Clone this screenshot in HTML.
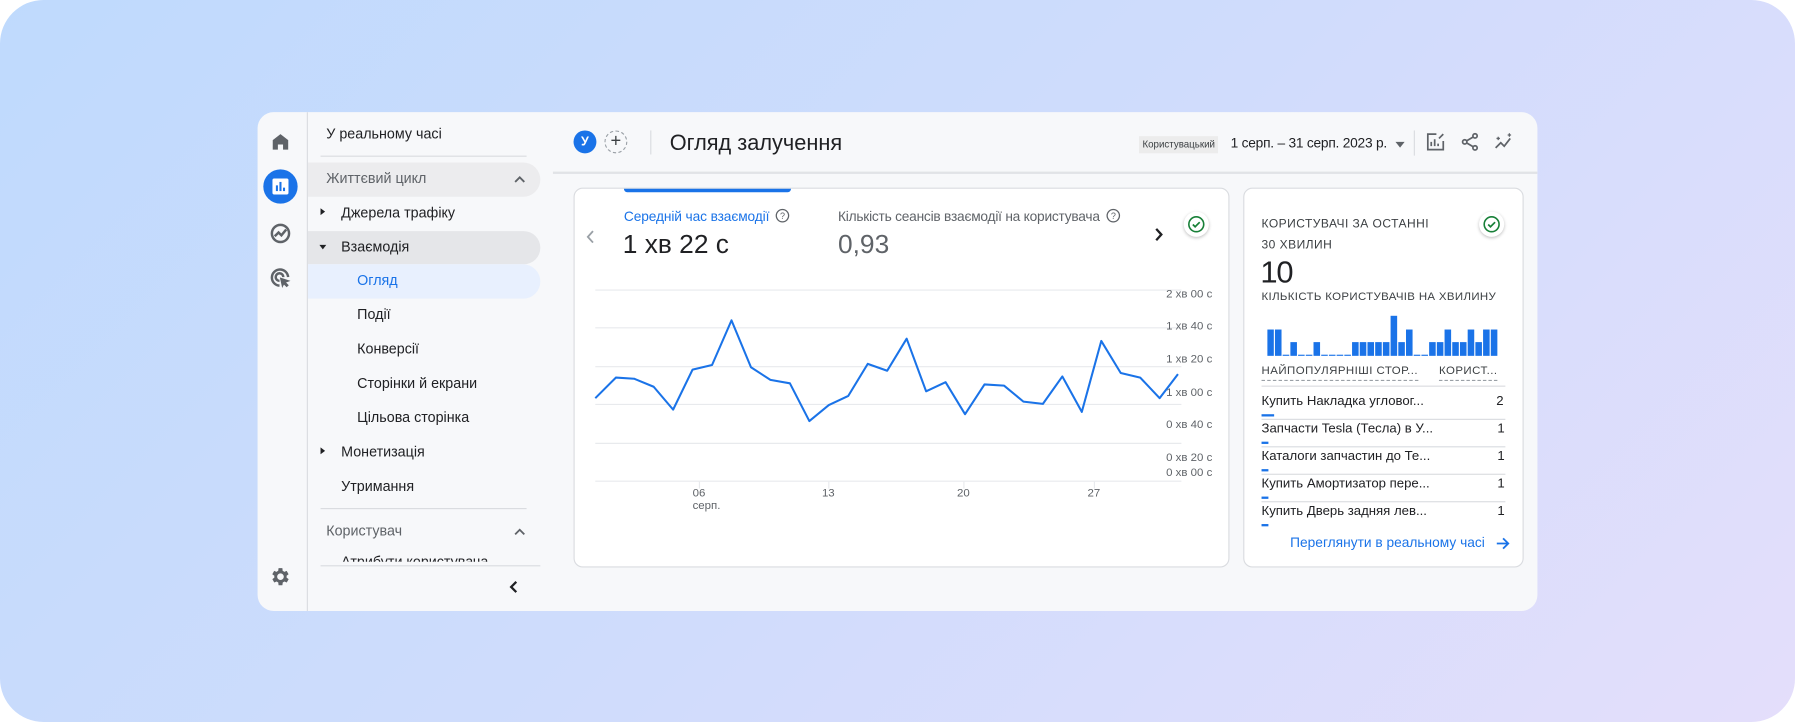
<!DOCTYPE html>
<html><head><meta charset="utf-8"><style>
*{margin:0;padding:0;box-sizing:border-box}
html,body{width:1795px;height:722px;overflow:hidden;background:#fff}
#stage{position:absolute;left:0;top:0;width:1568px;height:631px;transform:scale(1.14477,1.1442);transform-origin:0 0;border-radius:38px;background:linear-gradient(135deg,#bfdafd 0%,#cfdcfc 50%,#e4defb 100%);font-family:"Liberation Sans","Noto Sans CJK SC",sans-serif;color:#202124;overflow:hidden}
.a{position:absolute;white-space:nowrap}
#card{position:absolute;left:225px;top:98px;width:1118px;height:436px;background:#f7f8fa;border-radius:14px;overflow:hidden}
.nav{font-size:12.5px;color:#202124}
.tri{position:absolute;width:0;height:0}
.ax{font-size:10px;color:#5f6368;text-align:right}
.ph{font-size:10.5px;color:#3c4043;letter-spacing:.4px}
.row{font-size:11.5px;color:#202124}
.q{display:inline-block;vertical-align:-2px;margin-left:5px}
</style></head><body><div id="stage">
<div id="card">
 <div class="a" style="left:43px;top:0;width:1px;height:436px;background:#dadce0"></div>
 <svg class="a" style="left:11px;top:17px" width="18" height="18" viewBox="0 0 24 24"><path d="M12 3 3 10v11h6v-6h6v6h6V10z" fill="#5f6368"/></svg>
 <div class="a" style="left:5px;top:50px;width:30px;height:30px;border-radius:50%;background:#1a73e8"></div>
 <svg class="a" style="left:12px;top:57px" width="16" height="16" viewBox="0 0 16 16"><rect x="1" y="1" width="14" height="14" rx="1.5" fill="#fff"/><rect x="4" y="7" width="1.8" height="5" fill="#1a73e8"/><rect x="7.1" y="4" width="1.8" height="8" fill="#1a73e8"/><rect x="10.2" y="9" width="1.8" height="3" fill="#1a73e8"/></svg>
 <svg class="a" style="left:10px;top:96px" width="20" height="20" viewBox="0 0 24 24" fill="none" stroke="#5f6368" stroke-width="2.6"><circle cx="12" cy="12" r="9"/><path d="M6 15l4-4 3 3 5-6"/></svg>
 <svg class="a" style="left:10px;top:135px" width="20" height="20" viewBox="0 0 24 24" fill="none" stroke="#5f6368" stroke-width="2.6"><path d="M20 11A8.5 8.5 0 1 0 11 20"/><path d="M15 11a4 4 0 1 0-4 4"/><path d="M12 12l9 3-4 1.5 3 3-1.5 1.5-3-3L14 21z" fill="#5f6368" stroke-width="1"/></svg>
 <svg class="a" style="left:10px;top:396px" width="20" height="20" viewBox="0 0 24 24"><path fill="#5f6368" d="M19.4 13a7.5 7.5 0 0 0 0-2l2.1-1.6-2-3.5-2.5 1a7 7 0 0 0-1.7-1L15 3h-4l-.4 2.9a7 7 0 0 0-1.7 1l-2.5-1-2 3.5L6.6 11a7.5 7.5 0 0 0 0 2l-2.1 1.6 2 3.5 2.5-1a7 7 0 0 0 1.7 1L11 21h4l.4-2.9a7 7 0 0 0 1.7-1l2.5 1 2-3.5zM13 15.5a3.5 3.5 0 1 1 0-7 3.5 3.5 0 0 1 0 7z" transform="translate(-1 0)"/></svg>
 <div class="a nav" style="left:60px;top:12px">У реальному часі</div>
 <div class="a" style="left:55px;top:38px;width:180px;height:1px;background:#dadce0"></div>
 <div class="a" style="left:44px;top:44px;width:203px;height:30px;background:#ececee;border-radius:0 15px 15px 0"></div>
 <div class="a nav" style="left:60px;top:51px;color:#5f6368">Життєвий цикл</div>
 <svg class="a" style="left:223px;top:54px" width="12" height="10" viewBox="0 0 12 10"><path d="M2 7l4-4 4 4" fill="none" stroke="#5f6368" stroke-width="1.6"/></svg>
 <div class="tri" style="left:55px;top:84px;border-left:4px solid #202124;border-top:3px solid transparent;border-bottom:3px solid transparent"></div>
 <div class="a nav" style="left:73px;top:81px">Джерела трафіку</div>
 <div class="a" style="left:44px;top:104px;width:203px;height:29px;background:#e5e6e9;border-radius:0 15px 15px 0"></div>
 <div class="tri" style="left:54px;top:116px;border-top:4px solid #202124;border-left:3px solid transparent;border-right:3px solid transparent"></div>
 <div class="a nav" style="left:73px;top:111px">Взаємодія</div>
 <div class="a" style="left:44px;top:133px;width:203px;height:30px;background:#e8f0fe;border-radius:0 15px 15px 0"></div>
 <div class="a nav" style="left:87px;top:140px;color:#1a73e8">Огляд</div>
 <div class="a nav" style="left:87px;top:170px">Події</div>
 <div class="a nav" style="left:87px;top:200px">Конверсії</div>
 <div class="a nav" style="left:87px;top:230px">Сторінки й екрани</div>
 <div class="a nav" style="left:87px;top:260px">Цільова сторінка</div>
 <div class="tri" style="left:55px;top:293px;border-left:4px solid #202124;border-top:3px solid transparent;border-bottom:3px solid transparent"></div>
 <div class="a nav" style="left:73px;top:290px">Монетизація</div>
 <div class="a nav" style="left:73px;top:320px">Утримання</div>
 <div class="a" style="left:55px;top:346px;width:180px;height:1px;background:#dadce0"></div>
 <div class="a nav" style="left:60px;top:359px;color:#5f6368">Користувач</div>
 <svg class="a" style="left:223px;top:362px" width="12" height="10" viewBox="0 0 12 10"><path d="M2 7l4-4 4 4" fill="none" stroke="#5f6368" stroke-width="1.6"/></svg>
 <div class="a nav" style="left:73px;top:387px;height:6px;overflow:hidden;line-height:12px">Атрибути користувача</div>
 <div class="a" style="left:55px;top:396px;width:192px;height:1px;background:#dadce0"></div>
 <svg class="a" style="left:219px;top:409px" width="10" height="12" viewBox="0 0 10 12"><path d="M7 1.5 2.5 6 7 10.5" fill="none" stroke="#202124" stroke-width="2"/></svg>
 <div class="a" style="left:276px;top:16px;width:20px;height:20px;border-radius:50%;background:#1a73e8;color:#fff;font-size:11px;text-align:center;line-height:20px;font-weight:bold">У</div>
 <div class="a" style="left:303px;top:16px;width:20px;height:20px;border-radius:50%;border:1px dashed #9aa0a6;color:#3c4043;font-size:16px;text-align:center;line-height:17px">+</div>
 <div class="a" style="left:343px;top:16px;width:1px;height:21px;background:#dadce0"></div>
 <div class="a" style="left:360px;top:17px;font-size:19px;color:#202124">Огляд залучення</div>
 <div class="a" style="left:770px;top:21px;height:15px;padding:0 3px;background:#ececec;font-size:8.5px;line-height:15px;color:#3c4043">Користувацький</div>
 <div class="a" style="left:850px;top:20px;font-size:12px;color:#202124;letter-spacing:-0.2px">1 серп. – 31 серп. 2023 р.</div>
 <div class="tri" style="left:994px;top:26px;border-top:5px solid #5f6368;border-left:4px solid transparent;border-right:4px solid transparent"></div>
 <div class="a" style="left:1010px;top:16px;width:1px;height:22px;background:#dadce0"></div>
 <svg class="a" style="left:1020px;top:17px" width="18" height="18" viewBox="0 0 24 24" fill="none" stroke="#5f6368" stroke-width="2"><path d="M13 3H3v18h18V11"/><path d="M7 17v-5M11 17V9M15 17v-3"/><path d="M16 8l5-5"/></svg>
 <svg class="a" style="left:1050px;top:17px" width="18" height="18" viewBox="0 0 24 24" fill="none" stroke="#5f6368" stroke-width="2"><circle cx="18" cy="5" r="2.5"/><circle cx="6" cy="12" r="2.5"/><circle cx="18" cy="19" r="2.5"/><path d="M8.2 10.8l7.6-4.5M8.2 13.2l7.6 4.5"/></svg>
 <svg class="a" style="left:1079px;top:17px" width="20" height="18" viewBox="0 0 24 24" fill="none" stroke="#5f6368" stroke-width="2"><path d="M2 19l6-6 4 4 7-9"/><path d="M5 6v4M3 8h4M18 2v4M16 4h4" stroke-width="1.5"/></svg>
 <div class="a" style="left:258px;top:52px;width:860px;height:2px;background:#e1e3e6"></div>
 <div class="a" style="left:276px;top:66px;width:573px;height:332px;background:#fff;border:1px solid #dadce0;border-radius:8px;overflow:hidden">
  <div class="a" style="left:43px;top:-1px;width:146px;height:4px;background:#1a73e8;border-radius:0 0 3px 3px"></div>
  <svg class="a" style="left:9px;top:35px" width="10" height="14" viewBox="0 0 10 14"><path d="M7 2 2.5 7 7 12" fill="none" stroke="#9aa0a6" stroke-width="1.6"/></svg>
  <div class="a" style="left:43px;top:17px;font-size:12px;color:#1a73e8;letter-spacing:-0.1px">Середній час взаємодії<svg class="q" width="13" height="13" viewBox="0 0 14 14"><circle cx="7" cy="7" r="5.8" fill="none" stroke="#5f6368" stroke-width="1.2"/><text x="7" y="10.2" font-size="8.5" text-anchor="middle" fill="#5f6368" font-family="Liberation Sans">?</text></svg></div>
  <div class="a" style="left:42px;top:35px;font-size:23px;color:#202124">1 хв 22 с</div>
  <div class="a" style="left:230px;top:17px;font-size:12px;color:#5f6368;letter-spacing:-0.2px">Кількість сеансів взаємодії на користувача<svg class="q" width="13" height="13" viewBox="0 0 14 14"><circle cx="7" cy="7" r="5.8" fill="none" stroke="#5f6368" stroke-width="1.2"/><text x="7" y="10.2" font-size="8.5" text-anchor="middle" fill="#5f6368" font-family="Liberation Sans">?</text></svg></div>
  <div class="a" style="left:230px;top:35px;font-size:23px;color:#5f6368">0,93</div>
  <svg class="a" style="left:505px;top:33px" width="10" height="14" viewBox="0 0 10 14"><path d="M3 2l4.5 5L3 12" fill="none" stroke="#202124" stroke-width="2"/></svg>
  <div class="a" style="left:532px;top:20px;width:22px;height:22px;border-radius:50%;background:#fff;box-shadow:0 1px 3px rgba(0,0,0,.25)"></div>
  <svg class="a" style="left:535px;top:23px" width="16" height="16" viewBox="0 0 16 16"><circle cx="8" cy="8" r="6.5" fill="none" stroke="#188038" stroke-width="1.4"/><path d="M5 8.2l2 2 4-4" fill="none" stroke="#188038" stroke-width="1.5"/></svg>
  <svg class="a" style="left:0;top:0" width="573" height="332">
   <g stroke="#e8eaed" stroke-width="1">
    <line x1="18" y1="88.5" x2="530" y2="88.5"/><line x1="18" y1="121.5" x2="530" y2="121.5"/><line x1="18" y1="155.5" x2="530" y2="155.5"/><line x1="18" y1="188.5" x2="530" y2="188.5"/><line x1="18" y1="222.5" x2="530" y2="222.5"/><line x1="18" y1="255.5" x2="530" y2="255.5"/>
    <line x1="109" y1="256" x2="109" y2="262"/><line x1="222" y1="256" x2="222" y2="262"/><line x1="340" y1="256" x2="340" y2="262"/><line x1="454" y1="256" x2="454" y2="262"/>
   </g>
   <polyline fill="none" stroke="#1a73e8" stroke-width="1.8" stroke-linejoin="round" points="18,183 36,165 52,166 69,173 86,193 103,158 120,154 137,115 154,156 171,167 188,170 205,203 222,189 239,181 256,153 273,159 290,131 307,177 324,169 341,197 358,171 375,172 392,186 409,188 426,164 443,195 460,133 477,161 494,165 511,183 527,162"/>
  </svg>
  <div class="a ax" style="right:14px;top:87px">2 хв 00 с</div>
  <div class="a ax" style="right:14px;top:115px">1 хв 40 с</div>
  <div class="a ax" style="right:14px;top:144px">1 хв 20 с</div>
  <div class="a ax" style="right:14px;top:173px">1 хв 00 с</div>
  <div class="a ax" style="right:14px;top:201px">0 хв 40 с</div>
  <div class="a ax" style="right:14px;top:230px">0 хв 20 с</div>
  <div class="a ax" style="right:14px;top:243px">0 хв 00 с</div>
  <div class="a ax" style="left:103px;top:261px;text-align:left">06<br>серп.</div>
  <div class="a ax" style="left:216px;top:261px">13</div>
  <div class="a ax" style="left:334px;top:261px">20</div>
  <div class="a ax" style="left:448px;top:261px">27</div>
 </div>
 <div class="a" style="left:861px;top:66px;width:245px;height:332px;background:#fff;border:1px solid #dadce0;border-radius:8px">
  <div class="a ph" style="left:15px;top:22px;line-height:18px">КОРИСТУВАЧІ ЗА ОСТАННІ<br>30 ХВИЛИН</div>
  <div class="a" style="left:205px;top:20px;width:22px;height:22px;border-radius:50%;background:#fff;box-shadow:0 1px 3px rgba(0,0,0,.25)"></div>
  <svg class="a" style="left:208px;top:23px" width="16" height="16" viewBox="0 0 16 16"><circle cx="8" cy="8" r="6.5" fill="none" stroke="#188038" stroke-width="1.4"/><path d="M5 8.2l2 2 4-4" fill="none" stroke="#188038" stroke-width="1.5"/></svg>
  <div class="a" style="left:14px;top:58px;font-size:27px;color:#202124;letter-spacing:-1px">10</div>
  <div class="a ph" style="left:15px;top:89px;font-size:10px;letter-spacing:.3px">КІЛЬКІСТЬ КОРИСТУВАЧІВ НА ХВИЛИНУ</div>
  <svg class="a" style="left:20px;top:108px" width="202" height="40" id="bars"></svg>
  <div class="a ph" style="left:15px;top:154px;font-size:10px;border-bottom:1px dashed #9aa0a6;padding-bottom:2px">НАЙПОПУЛЯРНІШІ СТОР...</div>
  <div class="a ph" style="left:170px;top:154px;font-size:10px;border-bottom:1px dashed #9aa0a6;padding-bottom:2px">КОРИСТ...</div>
  <div class="a" style="left:15px;top:172px;width:213px;height:1px;background:#dadce0"></div>
  <div class="a row" style="left:15px;top:180px">Купить Накладка угловог...</div><div class="a row" style="left:220px;top:180px">2</div>
  <div class="a" style="left:15px;top:197px;width:11px;height:2px;background:#1a73e8"></div>
  <div class="a" style="left:15px;top:201px;width:213px;height:1px;background:#dadce0"></div>
  <div class="a row" style="left:15px;top:204px">Запчасти Tesla (Тесла) в У...</div><div class="a row" style="left:221px;top:204px">1</div>
  <div class="a" style="left:15px;top:221px;width:6px;height:2px;background:#1a73e8"></div>
  <div class="a" style="left:15px;top:225px;width:213px;height:1px;background:#dadce0"></div>
  <div class="a row" style="left:15px;top:228px">Каталоги запчастин до Те...</div><div class="a row" style="left:221px;top:228px">1</div>
  <div class="a" style="left:15px;top:245px;width:6px;height:2px;background:#1a73e8"></div>
  <div class="a" style="left:15px;top:249px;width:213px;height:1px;background:#dadce0"></div>
  <div class="a row" style="left:15px;top:252px">Купить Амортизатор пере...</div><div class="a row" style="left:221px;top:252px">1</div>
  <div class="a" style="left:15px;top:269px;width:6px;height:2px;background:#1a73e8"></div>
  <div class="a" style="left:15px;top:273px;width:213px;height:1px;background:#dadce0"></div>
  <div class="a row" style="left:15px;top:276px">Купить Дверь задняя лев...</div><div class="a row" style="left:221px;top:276px">1</div>
  <div class="a" style="left:15px;top:293px;width:6px;height:2px;background:#1a73e8"></div>
  <div class="a" style="left:40px;top:302px;font-size:12px;color:#1a73e8">Переглянути в реальному часі</div>
  <svg class="a" style="left:219px;top:303px" width="14" height="14" viewBox="0 0 14 14"><path d="M1.5 7h10M7 2.5 11.5 7 7 11.5" fill="none" stroke="#1a73e8" stroke-width="1.6"/></svg>
 </div>
</div>
</div>
<script>
var h=[23,23,1,12,1,1,12,1,1,1,1,12,12,12,12,12,35,12,23,1,1,12,12,23,12,12,23,12,23,23];
var s='',w=202/h.length;
for(var i=0;i<h.length;i++){s+='<rect x="'+(i*w).toFixed(2)+'" y="'+(38-h[i])+'" width="'+(w-1).toFixed(2)+'" height="'+h[i]+'" fill="#1a73e8"/>';}
document.getElementById('bars').innerHTML=s;
</script>
</body></html>
